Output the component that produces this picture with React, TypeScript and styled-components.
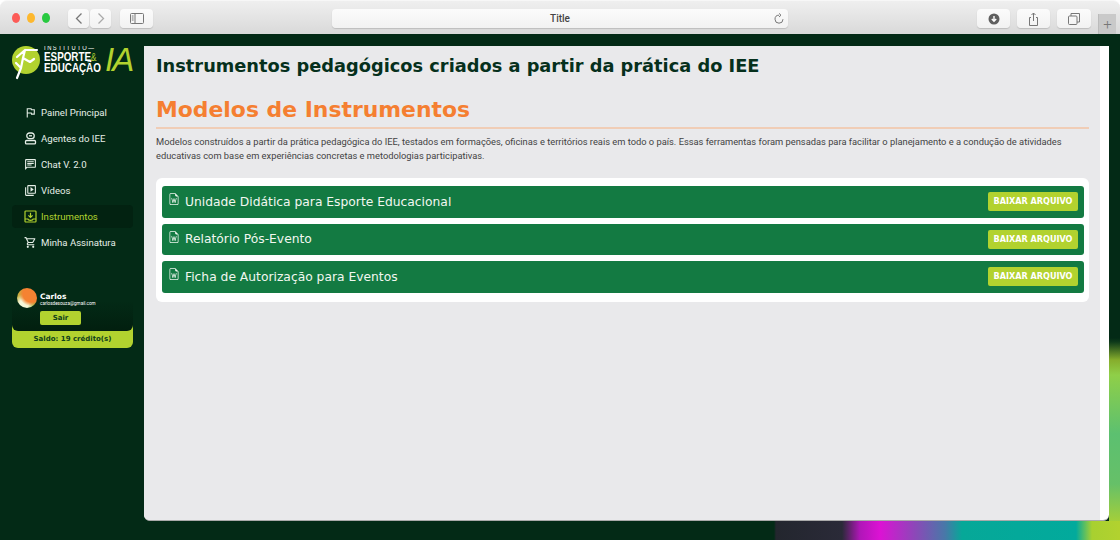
import React from "react";
import styled, { createGlobalStyle } from "styled-components";
import {
  MdOutlineChat,
  MdOutlineFlag,
  MdOutlineShoppingCart,
  MdOutlineVideoLibrary,
} from "react-icons/md";
import { BsFileEarmarkWord } from "react-icons/bs";

const display = `"DejaVu Sans", "Liberation Sans", sans-serif`;
const lime = "#b2d22f";

const Global = createGlobalStyle`
  html, body { margin: 0; padding: 0; background: #fff; }
  #root { width: 1120px; height: 540px; overflow: hidden; }
  * { box-sizing: border-box; }
`;

const Window = styled.div`
  width: 1120px;
  height: 540px;
  display: flex;
  flex-direction: column;
  font-family: Roboto, sans-serif;
`;

const Chrome = styled.header`
  height: 34px;
  flex: none;
  display: flex;
  align-items: flex-start;
  padding: 8px 4px 0 12px;
  background: linear-gradient(#efefef, #d9d9d9);
  border-radius: 7px 7px 0 0;
  border-top: 1px solid #f7f7f7;
`;

const Light = styled.span<{ $c: string }>`
  width: 10px;
  height: 10px;
  margin: 4px 7px 0 0;
  border-radius: 50%;
  background: ${(p) => p.$c};
`;

const ChromeBtn = styled.div<{ $w: number; $ml?: number }>`
  width: ${(p) => p.$w}px;
  height: 19px;
  margin-left: ${(p) => p.$ml ?? 0}px;
  flex: none;
  display: flex;
  align-items: center;
  justify-content: center;
  background: linear-gradient(#fbfbfb, #f2f2f2);
  border-radius: 4px;
  box-shadow: 0 1px 1px #bdbdbd;
`;

const Address = styled(ChromeBtn)`
  position: relative;
  font-size: 10px;
  font-weight: 500;
  color: #444;
`;

const Reload = styled.svg`
  position: absolute;
  right: 3px;
  top: 4px;
`;

const NewTab = styled.div`
  width: 18px;
  height: 20px;
  margin: 5px 0 0 7px;
  flex: none;
  background: #c9c9c9;
  display: flex;
  align-items: center;
  justify-content: center;
  color: #777;
  font-size: 15px;
  font-weight: 300;
  border-left: 1px solid #bbb;
`;

const Stage = styled.div`
  flex: 1;
  min-height: 0;
  display: flex;
  padding: 12px 11px 19px 0;
  background:
    linear-gradient(90deg, transparent 0, transparent 774px, #23262e 776px, #2a2a38 842px, #b016b8 860px, #dc12d4 880px, #8c48b8 915px, #4878a8 945px, #06a898 962px, #02aa9c 1076px, #a8d030 1092px, #b2d22f 1120px) bottom left / 1120px 19px no-repeat,
    linear-gradient(180deg, transparent 0, transparent 304px, #0e3a1a 308px, #86ad2c 326px, #8fcf48 341px, #5cc070 400px, #66c068 450px, #b2d22f 496px) top right / 11px 100% no-repeat,
    #032a16;
`;

const Sidebar = styled.aside`
  width: 144px;
  flex: none;
  display: flex;
  flex-direction: column;
  padding-left: 12px;
`;

const Logo = styled.div`
  height: 36px;
  width: 125px;
  display: flex;
  align-items: flex-start;
  overflow: hidden;
`;

const LogoText = styled.div`
  width: 60px;
  margin-top: -3px;
  flex: none;
  color: #fff;
  font-family: "Liberation Sans", sans-serif;
  font-weight: 700;
  font-size: 12px;
  line-height: 11px;
  transform: scaleX(0.82);
  transform-origin: left top;
  white-space: nowrap;
`;

const LogoSmall = styled.div`
  font-size: 7px;
  font-weight: 400;
  line-height: 9px;
  letter-spacing: 1.9px;
`;

const LogoAmp = styled.span`
  color: ${lime};
  font-weight: 400;
  font-size: 10px;
`;

const LogoIA = styled.div`
  margin: -4px 0 0 1px;
  color: ${lime};
  font-family: "Liberation Sans", sans-serif;
  font-style: italic;
  font-size: 33px;
  line-height: 36px;
  letter-spacing: -2px;
`;

const Nav = styled.nav`
  margin-top: 17px;
  display: flex;
  flex-direction: column;
  width: 121px;
`;

const Item = styled.div<{ $on?: boolean }>`
  height: ${(p) => (p.$on ? 23 : 26)}px;
  margin: ${(p) => (p.$on ? "2px 0 1px" : "0")};
  padding: 0 0 0 12px;
  display: flex;
  align-items: center;
  gap: 4px;
  font-size: 9.6px;
  font-weight: 400;
  color: ${(p) => (p.$on ? lime : "#e6efe8")};
  background: ${(p) => (p.$on ? "#022211" : "transparent")};
  border-radius: 4px;
  white-space: nowrap;
  svg {
    flex: none;
  }
`;

const User = styled.div`
  margin-top: 33px;
  width: 121px;
  position: relative;
  height: 60px;
`;

const Saldo = styled.div`
  position: absolute;
  left: 0;
  right: 0;
  bottom: 0;
  height: 25px;
  padding-top: 10px;
  background: ${lime};
  border-radius: 0 0 6px 6px;
  text-align: center;
  font-family: ${display};
  font-weight: 700;
  font-size: 7px;
  line-height: 12px;
  color: #103f1c;
`;

const UserCard = styled.div`
  position: absolute;
  inset: 0 0 17px 0;
  z-index: 1;
  background: linear-gradient(#032a16 0, #032a16 30%, #021f0f 100%);
  border-radius: 0 0 6px 6px;
  display: flex;
  padding: 0 0 0 5px;
`;

const Avatar = styled.div`
  width: 20px;
  height: 20px;
  flex: none;
  border-radius: 50%;
  background:
    radial-gradient(circle at 72% 28%, #f58232 0 42%, transparent 62%),
    radial-gradient(circle at 35% 80%, #f4f7d8 0 22%, transparent 50%),
    linear-gradient(135deg, #d9a83a, #8cc04a);
`;

const UserInfo = styled.div`
  margin-left: 3px;
  color: #fff;
  display: flex;
  flex-direction: column;
`;

const UserName = styled.div`
  font-family: ${display};
  font-weight: 700;
  font-size: 7.5px;
  line-height: 9px;
  margin-top: 4px;
`;

const UserMail = styled.div`
  font-size: 4.6px;
  line-height: 6px;
  white-space: nowrap;
`;

const Exit = styled.div`
  width: 41px;
  height: 14px;
  margin-top: 4px;
  border-radius: 2px;
  background: ${lime};
  color: #103f1c;
  font-family: ${display};
  font-weight: 700;
  font-size: 7px;
  line-height: 14px;
  text-align: center;
`;

const Panel = styled.main`
  flex: 1;
  min-width: 0;
  background: #fff;
  border-radius: 0 0 6px 6px;
  border-bottom: 1px solid #aaa;
  padding-right: 9px;
  display: flex;
  overflow: hidden;
`;

const Content = styled.div`
  flex: 1;
  min-width: 0;
  background: #e9e9eb;
  padding: 9px 11px 0 12px;
`;

const Title = styled.h1`
  margin: 0;
  font-family: ${display};
  font-weight: 700;
  font-size: 17.8px;
  line-height: 22px;
  color: #06301c;
  white-space: nowrap;
`;

const Heading = styled.h2`
  margin: 19px 0 0;
  padding-bottom: 3px;
  border-bottom: 2px solid #f0cdb6;
  font-family: ${display};
  font-weight: 700;
  font-size: 21.9px;
  line-height: 28px;
  color: #f57f31;
  white-space: nowrap;
`;

const Lead = styled.p`
  margin: 6px 0 0;
  font-size: 9.32px;
  line-height: 14px;
  color: #434343;
`;

const Card = styled.section`
  margin-top: 15px;
  width: 933px;
  padding: 8px 5px 9px 6px;
  background: #fff;
  border-radius: 6px;
  display: flex;
  flex-direction: column;
  gap: 6px;
`;

const Row = styled.div`
  height: 31.5px;
  display: flex;
  align-items: center;
  padding: 0 6px;
  background: #137a42;
  border-radius: 3px;
  color: #f1f7f0;
`;

const RowIcon = styled.span`
  display: flex;
  align-self: flex-start;
  margin-top: 7px;
`;

const RowName = styled.span`
  margin-left: 5px;
  flex: 1;
  font-family: ${display};
  font-size: 12.3px;
  white-space: nowrap;
`;

const Download = styled.div`
  width: 90px;
  height: 19px;
  border-radius: 2px;
  background: ${lime};
  color: #fff;
  font-family: ${display};
  font-weight: 700;
  font-size: 8.1px;
  line-height: 19px;
  text-align: center;
  white-space: nowrap;
`;

const gray = "#777";

const docs = [
  "Unidade Didática para Esporte Educacional",
  "Relatório Pós-Evento",
  "Ficha de Autorização para Eventos",
];

const BotIcon = () => (
  <svg width="13" height="13" viewBox="0 0 13 13" fill="none" stroke="currentColor" strokeWidth="1.3">
    <rect x="2.800" y="1" width="7.400" height="5.600" rx="2.600" />
    <rect x="1.500" y="8.500" width="10" height="3.400" rx="1" />
    <path d="M5 3.800h3" />
  </svg>
);

const TrayIcon = () => (
  <svg width="13" height="13" viewBox="0 0 13 13" fill="none" stroke="currentColor" strokeWidth="1.200">
    <rect x="1" y="1" width="11" height="11" rx="0.800" />
    <path d="M6.500 2.800v4.500M4.400 5.400l2.100 2.100 2.100-2.100" />
    <path d="M1 9h2.800c.3 1 1.300 1.300 2.700 1.300s2.400-.3 2.700-1.300H12" />
  </svg>
);

const Athlete = () => (
  <svg width="32" height="36" viewBox="0 0 32 36" style={{ flex: "none" }}>
    <circle cx="14" cy="14" r="14" fill={lime} />
    <path
      d="M25 4 13 4 11 12 9 22 5 32M13 4 5 11M11 12 18 16 22 13M9 22 4 17"
      fill="none"
      stroke="#fff"
      strokeWidth="2.200"
      strokeLinecap="round"
      strokeLinejoin="round"
    />
  </svg>
);

export default function App() {
  return (
    <Window>
      <Global />
      <Chrome>
        <Light $c="#fc5b57" />
        <Light $c="#fdb82e" />
        <Light $c="#28c940" />
        <ChromeBtn $w={21} $ml={11}>
          <svg width="10" height="13" viewBox="0 0 10 13" fill="none" stroke={gray} strokeWidth="1.300">
            <path d="M7.500 1.500 2.500 6.500l5 5" />
          </svg>
        </ChromeBtn>
        <ChromeBtn $w={21} $ml={1}>
          <svg width="10" height="13" viewBox="0 0 10 13" fill="none" stroke="#aaa" strokeWidth="1.300">
            <path d="M2.500 1.500l5 5-5 5" />
          </svg>
        </ChromeBtn>
        <ChromeBtn $w={33} $ml={9}>
          <svg width="14" height="11" viewBox="0 0 14 11" fill="none" stroke={gray} strokeWidth="1">
            <rect x="0.500" y="0.500" width="13" height="10" rx="1" />
            <path d="M5 .5v10M1.800 3h1.800M1.800 5h1.800M1.800 7h1.800" />
          </svg>
        </ChromeBtn>
        <Address $w={456} $ml={179}>
          Title
          <Reload width="12" height="12" viewBox="0 0 12 12" fill="none" stroke={gray} strokeWidth="1">
            <path d="M6 2.200a4 4 0 1 0 4 4M6 .4l2 1.800L6 4" />
          </Reload>
        </Address>
        <ChromeBtn $w={33} $ml={189}>
          <svg width="12" height="12" viewBox="0 0 12 12">
            <circle cx="6" cy="6" r="5.500" fill="#5f5f5f" />
            <path d="M6 3v5M3.800 6 6 8.300 8.200 6" fill="none" stroke="#fff" strokeWidth="1.400" />
          </svg>
        </ChromeBtn>
        <ChromeBtn $w={33} $ml={7}>
          <svg width="11" height="14" viewBox="0 0 11 14" fill="none" stroke={gray} strokeWidth="1">
            <path d="M3 5.500H1.500v8h8v-8H8M5.500 9V1M3.500 3l2-2 2 2" />
          </svg>
        </ChromeBtn>
        <ChromeBtn $w={34} $ml={7}>
          <svg width="12" height="12" viewBox="0 0 12 12" fill="none" stroke={gray} strokeWidth="1">
            <rect x="0.500" y="3" width="8.500" height="8.500" rx="1" />
            <path d="M3 3V.5h8.500V9H9" />
          </svg>
        </ChromeBtn>
        <NewTab>+</NewTab>
      </Chrome>
      <Stage>
        <Sidebar>
          <Logo>
            <Athlete />
            <LogoText>
              <LogoSmall>INSTITUTO—</LogoSmall>
              <div>
                ESPORTE<LogoAmp>&amp;</LogoAmp>
              </div>
              <div>EDUCAÇÃO</div>
            </LogoText>
            <LogoIA>IA</LogoIA>
          </Logo>
          <Nav>
            <Item>
              <MdOutlineFlag size={13} />
              Painel Principal
            </Item>
            <Item>
              <BotIcon />
              Agentes do IEE
            </Item>
            <Item>
              <MdOutlineChat size={13} />
              Chat V. 2.0
            </Item>
            <Item>
              <MdOutlineVideoLibrary size={13} />
              Vídeos
            </Item>
            <Item $on>
              <TrayIcon />
              Instrumentos
            </Item>
            <Item>
              <MdOutlineShoppingCart size={13} />
              Minha Assinatura
            </Item>
          </Nav>
          <User>
            <UserCard>
              <Avatar />
              <UserInfo>
                <UserName>Carlos</UserName>
                <UserMail>carlosdesouza@gmail.com</UserMail>
                <Exit>Sair</Exit>
              </UserInfo>
            </UserCard>
            <Saldo>Saldo: 19 crédito(s)</Saldo>
          </User>
        </Sidebar>
        <Panel>
          <Content>
            <Title>Instrumentos pedagógicos criados a partir da prática do IEE</Title>
            <Heading>Modelos de Instrumentos</Heading>
            <Lead>
              Modelos construídos a partir da prática pedagógica do IEE, testados em formações, oficinas e territórios reais em todo o país. Essas ferramentas foram pensadas para facilitar o planejamento e a condução de atividades educativas com base em experiências concretas e metodologias participativas.
            </Lead>
            <Card>
              {docs.map((d) => (
                <Row key={d}>
                  <RowIcon>
                    <BsFileEarmarkWord size={12} />
                  </RowIcon>
                  <RowName>{d}</RowName>
                  <Download>BAIXAR ARQUIVO</Download>
                </Row>
              ))}
            </Card>
          </Content>
        </Panel>
      </Stage>
    </Window>
  );
}
